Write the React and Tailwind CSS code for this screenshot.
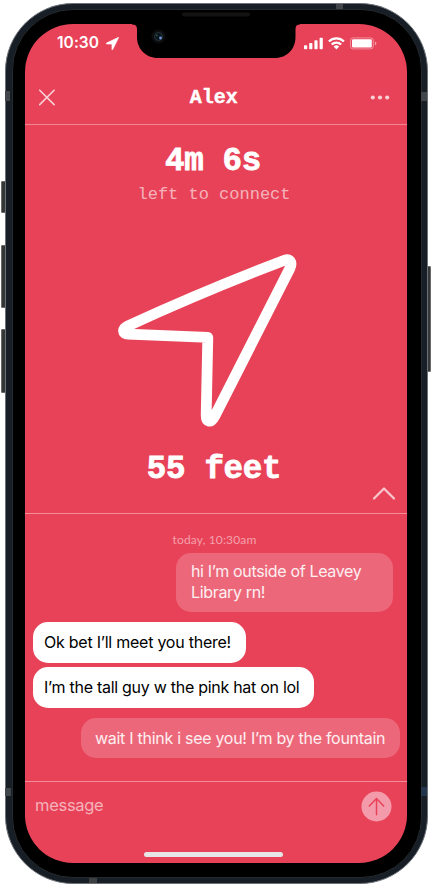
function StatusBar() {
  return (
    <div className="flex h-[38px] items-center justify-between pl-8 pr-[30px] text-white">
      <div className="flex items-center gap-[7px]">
        <span className="whitespace-nowrap text-[15.5px] font-semibold leading-5 tracking-[0.05px]">10:30</span>
        <svg className="h-[13px] w-[13px]" viewBox="0 0 12 12" fill="currentColor">
          <path d="M11.7.3.4 5.6c-.4.2-.2.8.1.8l5 .1v5c0 .4.6.5.7.1Z" stroke="currentColor" strokeWidth=".6" strokeLinejoin="round" />
        </svg>
      </div>
      <svg className="h-[13px] w-[73px]" viewBox="0 0 73 13" fill="currentColor">
        <rect x="0" y="8.2" width="3.2" height="4" rx=".8" />
        <rect x="5.2" y="6" width="3.2" height="6.2" rx=".8" />
        <rect x="10.4" y="3.3" width="3.2" height="8.9" rx=".8" />
        <rect x="15.6" y=".7" width="3.2" height="11.5" rx=".8" />
        <g fill="none" stroke="currentColor" strokeWidth="2.3">
          <path d="M24.9 4.5a10.5 10.5 0 0 1 15 0" />
          <path d="M27.7 7.5a6.7 6.7 0 0 1 9.4 0" />
        </g>
        <path d="M29.6 9.5a4.1 4.1 0 0 1 5.6 0L32.4 12.4Z" />
        <rect x="46.5" y=".9" width="22.8" height="11" rx="2.6" fill="none" stroke="currentColor" strokeOpacity=".4" />
        <rect x="48" y="2.3" width="19.8" height="8.3" rx="1.3" />
        <path d="M70.8 4.5v4c1-.4 1.6-1.1 1.6-2s-.6-1.6-1.6-2Z" opacity=".45" />
      </svg>
    </div>
  );
}

function Header() {
  return (
    <header className="flex h-[63px] items-center justify-between border-b border-white/35 pl-[12.5px] pr-[17px] pt-[9px]">
      <svg className="h-[18px] w-[18px] text-white/75" viewBox="0 0 18 18" fill="none" stroke="currentColor" strokeWidth="1.6" strokeLinecap="round">
        <path d="m1.7 1.2 14.4 14.4M16.1 1.2 1.7 15.6" />
      </svg>
      <h1 className="ml-[2px] font-['Liberation_Mono',monospace] text-[20px] font-bold leading-6 text-white [-webkit-text-stroke:0.4px_white]">Alex</h1>
      <svg className="h-[5px] w-5 text-white/75" viewBox="0 0 20 5" fill="currentColor">
        <circle cx="2.8" cy="2.5" r="2.1" />
        <circle cx="10" cy="2.5" r="2.1" />
        <circle cx="17.2" cy="2.5" r="2.1" />
      </svg>
    </header>
  );
}

function Finder() {
  return (
    <section className="flex h-[389px] flex-col items-center border-b border-white/40 pt-[18px] font-['Liberation_Mono',monospace]">
      <p className="mr-[6px] whitespace-pre text-[32.5px] font-bold leading-[38px] tracking-[-0.3px] text-white [-webkit-text-stroke:0.8px_white]">4m 6s</p>
      <p className="mr-[4px] mt-[2px] text-[17px] leading-6 text-white/60">left to connect</p>
      <svg className="mt-[41px] h-[180px] w-[190px] -translate-x-[9px]" viewBox="112 248 190 180" fill="none" stroke="white" strokeWidth="10.8" strokeLinejoin="round">
        <path d="M128 325.8 C180 302 230 281 284.5 260.2 C289.5 258.3 292.8 262 289.8 268.5 L214.8 416 C210.8 423.5 206 422.7 206.2 414.5 L207.8 337.4 L128 334.2 C122.3 334 121.8 328.6 128 325.8 Z" />
      </svg>
      <p className="mr-[4px] mt-[23px] whitespace-pre text-[32.5px] font-bold leading-[38px] tracking-[-0.3px] text-white [-webkit-text-stroke:0.8px_white]">55 feet</p>
      <svg className="-mt-[3px] mr-[11.5px] h-[15px] w-6 self-end text-white/70" viewBox="0 0 24 15" fill="none" stroke="currentColor" strokeWidth="2.2" strokeLinecap="round" strokeLinejoin="round">
        <path d="m2 12.5 10-10 10 10" />
      </svg>
    </section>
  );
}

function Chat() {
  return (
    <section className="flex h-[268px] flex-col border-b border-white/40 pl-2 pr-2 pt-[18px] text-[16px] leading-[21px] tracking-[-0.28px]">
      <p className="self-center pr-[3px] font-['Lato',sans-serif] text-[12px] leading-4 tracking-[0.15px] text-white/50">today, 10:30am</p>
      <p className="mr-[6px] mt-[5px] h-[59px] w-[217px] self-end rounded-[15px] bg-white/20 pl-[15px] pt-[8px] tracking-[-0.34px] text-white/90">
        hi I’m outside of Leavey<br />Library rn!
      </p>
      <p className="mt-[10px] flex h-[41px] w-[213px] items-center whitespace-nowrap rounded-[15px] bg-white pl-[11px] tracking-[-0.24px] text-black">Ok bet I’ll meet you there!</p>
      <p className="mt-[4px] flex h-[41px] w-[281px] items-center whitespace-nowrap rounded-[15px] bg-white pl-[11px] text-black">I’m the tall guy w the pink hat on lol</p>
      <p className="-mr-[1px] mt-[10px] flex h-[40px] w-[319px] items-center self-end whitespace-nowrap rounded-[15px] bg-white/20 pl-[14px] text-white/90">wait I think i see you! I’m by the fountain</p>
    </section>
  );
}

function Composer() {
  return (
    <footer className="flex h-[81px] flex-col items-center">
      <div className="flex w-full items-center justify-between pl-[10px] pr-[15.5px] pt-[9px]">
        <span className="-mt-[4px] text-[16.5px] leading-6 tracking-[-0.3px] text-white/60">message</span>
        <svg className="h-[31px] w-[31px]" viewBox="0 0 31 31" fill="none">
          <circle cx="15.5" cy="15.5" r="15" fill="#f49bab" />
          <path d="M15.5 23.7V7.8M8.3 15l7.2-7.4 7.2 7.4" stroke="#e84258" strokeWidth="1.5" strokeLinecap="round" strokeLinejoin="round" />
        </svg>
      </div>
      <div className="-ml-[5px] mt-[30px] h-[5px] w-[139px] rounded-full bg-[#e6e6e6]" />
    </footer>
  );
}

function Notch() {
  return (
    <svg className="absolute left-[132px] top-[10px] h-[50px] w-[168px]" viewBox="132 10 168 50">
      <path d="M132 24.6Q137 24.6 137 29V37C137 49 146 58 158 58H275C287 58 295.5 49 295.5 37V29Q295.5 24.6 300 24.6V10H132Z" fill="#000" />
      <rect x="182" y="12.5" width="68" height="4" rx="2" fill="#131313" />
      <circle cx="158.5" cy="36.5" r="7" fill="#0b0c0e" />
      <circle cx="158.5" cy="36.5" r="4" fill="#08131a" stroke="#29343a" />
      <circle cx="160.5" cy="38" r="1.4" fill="#6d94d6" />
      <circle cx="156.8" cy="35.5" r="1" fill="#24534b" />
    </svg>
  );
}

function SideButtons() {
  const look = "absolute border border-[#686a69] bg-[#343638]";
  return (
    <>
      <i className={look + " left-[1px] top-[181px] h-8 w-[5px] rounded-l-[1px]"} />
      <i className={look + " left-[1px] top-[245px] h-[63px] w-[5px] rounded-l-[1px]"} />
      <i className={look + " left-[1px] top-[329px] h-[64px] w-[5px] rounded-l-[1px]"} />
      <i className={look + " right-[1px] top-[266px] h-[106px] w-[5px] rounded-r-[1px]"} />
    </>
  );
}

function AntennaBands() {
  return (
    <>
      <i className="absolute left-[5px] top-[91px] h-[10px] w-[5px] bg-[#42464a]" />
      <i className="absolute left-[421px] top-[92px] h-[9px] w-[6px] bg-[#42464a]" />
      <i className="absolute left-[5px] top-[788px] h-[8px] w-[6px] bg-[#42464a]" />
      <i className="absolute left-[421px] top-[787px] h-[9px] w-[6px] bg-[#24364c]" />
      <i className="absolute left-[336px] top-[4px] h-[5px] w-[7px] bg-[#42464a]" />
      <i className="absolute left-[89px] top-[878px] h-[5px] w-[8px] bg-[#3c3e40]" />
    </>
  );
}

export default function App() {
  return (
    <main className="relative h-[888px] w-[432px] overflow-hidden bg-white pl-[5px] pt-[3px] font-['Inter',sans-serif]">
      <SideButtons />
      <div className="relative h-[881px] w-[423px] rounded-[68px] border border-[#6d7278] bg-[#171e25] pl-[6px] pt-[5px]">
        <div className="h-[869px] w-[410px] rounded-[61px] border border-[#252a2e] bg-black pl-[12px] pt-[14px]">
          <div className="h-[839px] w-[382px] overflow-hidden rounded-[48px] bg-[#e84258]">
            <StatusBar />
            <Header />
            <Finder />
            <Chat />
            <Composer />
          </div>
        </div>
      </div>
      <AntennaBands />
      <Notch />
    </main>
  );
}
